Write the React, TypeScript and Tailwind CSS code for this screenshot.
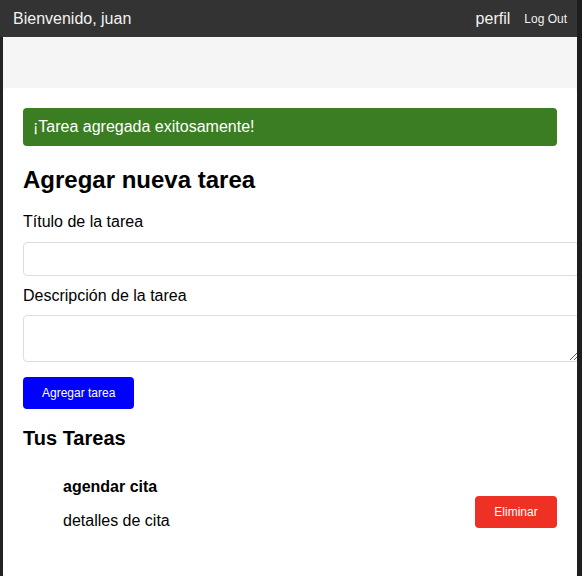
import React from 'react';

const App = () => {
  return (
    <div className="w-[582px] h-[576px] bg-[#1e1e1e] flex overflow-hidden" style={{ fontFamily: '"Liberation Sans", Arial, sans-serif' }}>
      <div className="w-[577px] flex flex-col">
        <header className="h-[37px] bg-[#333333] flex items-center justify-between pl-[13px] pr-[10px] text-[#f2f2f2]">
          <span className="text-[16px]">Bienvenido, juan</span>
          <div className="flex items-center gap-[14px]">
            <span className="text-[16px]">perfil</span>
            <span className="text-[12px]">Log Out</span>
          </div>
        </header>
        <div className="flex flex-1">
          <div className="w-[3px] bg-[#232323]" />
          <div className="flex-1 bg-[#f5f5f5] pt-[51px] overflow-hidden">
            <div className="bg-white rounded-[4px] h-full px-[20px] pt-[20px] text-black">
              <div className="bg-[#3a7d22] text-white text-[16px] rounded-[4px] h-[38px] flex items-center px-[10px]">
                ¡Tarea agregada exitosamente!
              </div>
              <h2 className="mt-[20px] text-[24px] leading-[28px] font-bold">Agregar nueva tarea</h2>
              <label className="block mt-[19px] text-[16px] leading-[18px]">Título de la tarea</label>
              <input className="block mt-[11px] w-full box-content px-[10px] h-[32px] border border-[#dddddd] rounded-[4px] outline-none" />
              <label className="block mt-[11px] text-[16px] leading-[18px]">Descripción de la tarea</label>
              <textarea className="block mt-[10px] w-full box-content px-[10px] py-0 h-[45px] border border-[#dddddd] rounded-[4px] outline-none" />
              <button className="mt-[15px] h-[32px] px-[19px] bg-[#0000ff] text-white text-[12px] rounded-[4px]">Agregar tarea</button>
              <h3 className="mt-[17px] text-[20px] leading-[24px] font-bold">Tus Tareas</h3>
              <div className="mt-[28px] flex items-center justify-between pl-[40px]">
                <div className="pb-[16px]">
                  <div className="text-[16px] leading-[18px] font-bold">agendar cita</div>
                  <div className="mt-[16px] text-[16px] leading-[18px]">detalles de cita</div>
                </div>
                <button className="h-[32px] w-[82px] bg-[#ee3124] text-white text-[12px] rounded-[4px]">Eliminar</button>
              </div>
            </div>
          </div>
        </div>
      </div>
    </div>
  );
};

export default App;
